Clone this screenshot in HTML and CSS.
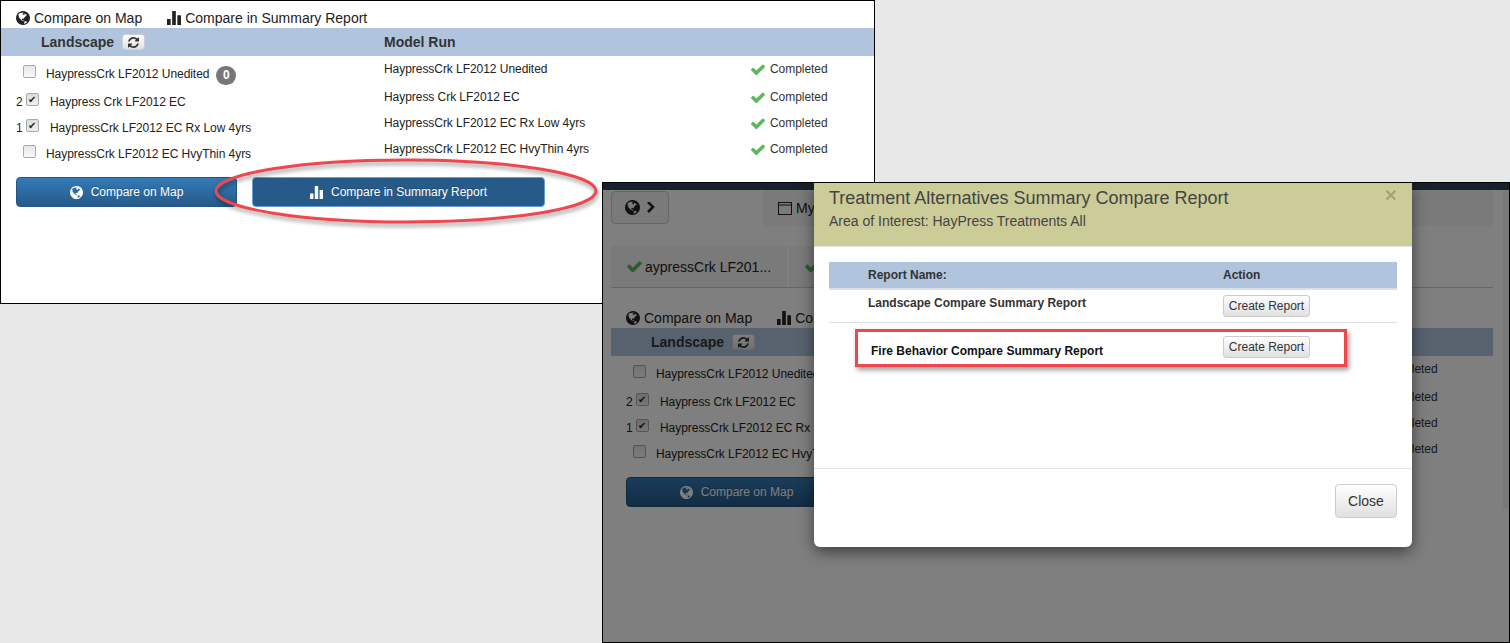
FILE: index.html
```html
<!DOCTYPE html>
<html>
<head>
  <meta charset="utf-8">
  <title>Compare Summary Report</title>
  <link rel="stylesheet" href="styles.css">
</head>
<body>

<svg class="defs" width="0" height="0">
  <symbol id="i-globe" viewBox="128 128 1536 1536"><path d="M896 128q209 0 385.5 103t279.5 279.5 103 385.5-103 385.5-279.5 279.5-385.5 103-385.5-103-279.5-279.5-103-385.5 103-385.5 279.5-279.5 385.5-103zm274 521q-2 1-9.5 9.5t-13.5 9.5q2 0 4.5-5t5-11 3.5-7q6-7 22-15 14-6 52-12 34-8 51 11-2-2 9.5-13t14.5-12q3-2 15-4.5t15-7.5l2-22q-12 1-17.5-7t-6.5-21q0 2-6 8 0-7-4.5-8t-11.5 1-9 1q-10-3-15-7.5t-8-16.5-4-15q-2-5-9.5-11t-9.5-10q-1-2-2.5-5.5t-3-6.5-4-5.5-5.5-2.5-7 5-7.5 10-4.5 5q-3-2-6-1.5t-4.5 1-4.5 3-5 3.5q-3 2-8.5 3t-8.5 2q15-5-1-11-10-4-16-3 9-4 7.5-12t-8.5-14h5q-1-4-8.5-8.5t-17.5-8.5-13-6q-8-5-34-9.5t-33-.5q-5 6-4.5 10.5t4 14 3.5 12.5q1 6-5.5 13t-6.5 12q0 7 14 15.5t10 21.5q-3 8-16 16t-16 12q-5 8-1.5 18.5t10.5 16.5q2 2 1.5 4t-3.5 4.5-5.5 4-6.5 3.5l-3 2q-11 5-20.5-6t-13.5-26q-7-25-16-30-23-8-29 1-5-13-41-26-25-9-58-4 6-1 0-15-7-15-19-12 3-6 4-17.5t1-13.5q3-13 12-23 1-1 7-8.5t9.5-13.5.5-6q35 4 50-11 5-5 11.5-17t10.5-17q9-6 14-5.5t14.5 5.5 14.5 5q14 1 15.5-11t-7.5-20q12 1 3-17-4-7-8-9-12-4-27 5-8 4 2 8-1-1-9.5 10.5t-16.5 17.5-16-5q-1-1-5.5-13.5t-9.5-13.5q-8 0-16 15 3-8-11-15t-24-8q19-12-8-27-7-4-20.5-5t-19.5 4q-5 7-5.5 11.5t5 8 10.5 5.5 11.5 4 8.5 3q14 10 8 14-2 1-8.5 3.5t-11.5 4.5-6 4q-3 4 0 14t-2 14q-5-5-9-17.5t-7-16.5q7 9-25 6l-10-1q-4 0-16 2t-20.5 1-13.5-8q-4-8 0-20 1-4 4-2-4-3-11-9.5t-10-8.5q-46 15-94 41 6 1 12-1 5-2 13-6.5t10-5.5q34-14 42-7l5-5q14 16 20 25-7-4-30-1-20 6-22 12 7 12 5 18-4-3-11.5-10t-14.5-11-15-5q-16 0-22 1-146 80-235 222 7 7 12 8 4 1 5 9t2.5 11 11.5-3q9 8 3 19 1-1 44 27 19 17 21 21 3 11-10 18-1-2-9-9t-9-4q-3 5 .5 18.5t10.5 12.5q-7 0-9.5 16t-2.5 35.5-1 23.5l2 1q-3 12 5.5 34.5t21.5 19.5q-13 3 20 43 6 8 8 9 3 2 12 7.5t15 10 10 10.5q4 5 10 22.5t14 23.5q-2 6 9.5 20t10.5 23q-1 0-2.5 1t-2.5 1q3 7 15.5 14t15.5 13q1 3 2 10t3 11 8 2q2-20-24-62-15-25-17-29-3-5-5.5-15.5t-4.5-14.5q2 0 6 1.5t8.5 3.5 7.5 4 2 3q-3 7 2 17.5t12 18.5 17 19 12 13q6 6 14 19.5t0 13.5q9 0 20 10.5t17 19.5q5 8 8 26t5 24q2 7 8.5 13.5t12.5 9.5l16 8 13 7q5 2 18.5 10.5t21.5 11.5q10 4 16 4t14.5-2.5 13.5-3.5q15-2 29 15t21 21q36 19 55 11-2 1 .5 7.5t8 15.5 9 14.5 5.5 8.5q5 6 18 15t18 15q6-4 7-9-3 8 7 20t18 10q14-3 14-32-31 15-49-18 0-1-2.5-5.5t-4-8.5-2.5-8.5 0-7.5 5-3q9 0 10-3.5t-2-12.5-4-13q-1-8-11-20t-12-15q-5 9-16 8t-16-9q0 1-1.5 5.5t-1.5 6.5q-13 0-15-1 1-3 2.5-17.5t3.5-22.5q1-4 5.5-12t7.5-14.5 4-12.5-4.5-9.5-17.5-2.5q-19 1-26 20-1 3-3 10.5t-5 11.5-9 7q-7 3-24 2t-24-5q-13-8-22.5-29t-9.5-37q0-10 2.5-26.5t3-25-5.5-24.5q3-2 9-9.5t10-10.5q2-1 4.5-1.5t4.5 0 4-1.5 3-6q-1-1-4-3-3-3-4-3 7 3 28.5-1.5t27.5 1.5q15 11 22-2 0-1-2.5-9.5t-.5-13.5q5 27 29 9 3 3 15.5 5t17.5 5q3 2 7 5.5t5.5 4.5 5-.5 8.5-6.5q10 14 12 24 11 40 19 44 7 3 11 2t4.5-9.5 0-14-1.5-12.5l-1-8v-18l-1-8q-15-3-18.5-12t1.5-18.5 15-18.5q1-1 8-3.5t15.5-6.5 12.5-8q21-19 15-35 7 0 11-9-1 0-5-3t-7.5-5-4.5-2q9-5 2-16 5-3 7.5-11t7.5-10q9 12 21 2 8-8 1-16 5-7 20.5-10.5t18.5-9.5q7 2 8-2t1-12 3-12q4-5 15-9t13-5l17-11q3-4 0-4 18 2 31-11 10-11-6-20 3-6-3-9.5t-15-5.5q3-1 11.5-.5t10.5-1.5q15-10-7-16-17-5-43 12zm-163 877q206-36 351-189-3-3-12.5-4.5t-12.5-3.5q-18-7-24-8 1-7-2.5-13t-8-9-12.5-8-11-7q-2-2-7-6t-7-5.5-7.5-4.5-8.5-2-10 1l-3 1q-3 1-5.5 2.5t-5.5 3-4 3 0 2.5q-21-17-36-22-5-1-11-5.5t-10.5-7-10-1.5-11.5 7q-5 5-6 15t-2 13q-7-5 0-17.5t2-18.5q-3-6-10.5-4.5t-12 4.5-11.5 8.5-9 6.5-8.5 5.5-8.5 7.5q-3 4-6 12t-5 11q-2-4-11.5-6.5t-9.5-5.5q2 10 4 35t5 38q7 31-12 48-27 25-29 40-4 22 12 26 0 7-8 20.5t-7 21.5q0 6 2 16z"/></symbol>
  <symbol id="i-bars" viewBox="0 0 13 13"><path d="M0 7.5h3.4V13H0zM4.8 0h3.4v13H4.8zM9.6 4h3.4v9H9.6z"/></symbol>
  <symbol id="i-refresh" viewBox="128 128 1536 1536"><path d="M1639 1056q0 5-1 7-64 268-268 434.5t-478 166.5q-146 0-282.5-55t-243.5-157l-129 129q-19 19-45 19t-45-19-19-45v-448q0-26 19-45t45-19h448q26 0 45 19t19 45-19 45l-137 137q71 66 161 102t187 36q134 0 250-65t186-179q11-17 53-117 8-23 30-23h192q13 0 22.5 9.5t9.5 22.5zm25-800v448q0 26-19 45t-45 19h-448q-26 0-45-19t-19-45 19-45l138-138q-148-137-349-137-134 0-250 65t-186 179q-11 17-53 117-8 23-30 23h-199q-13 0-22.5-9.5t-9.5-22.5v-7q65-268 270-434.5t480-166.5q146 0 284 55.5t245 156.5l130-129q19-19 45-19t45 19 19 45z"/></symbol>
  <symbol id="i-check" viewBox="121 316 1550 1160"><path d="M1671 566q0 40-28 68l-724 724-136 136q-28 28-68 28t-68-28l-136-136-362-362q-28-28-28-68t28-68l136-136q28-28 68-28t68 28l294 295 656-657q28-28 68-28t68 28l136 136q28 28 28 68z"/></symbol>
  <symbol id="i-chevron" viewBox="365 128 1017 1536"><path d="M1363 877l-742 742q-19 19-45 19t-45-19l-166-166q-19-19-19-45t19-45l531-531-531-531q-19-19-19-45t19-45l166-166q19-19 45-19t45 19l742 742q19 19 19 45t-19 45z"/></symbol>
</svg>

<!-- first screenshot: list with the two compare buttons -->
<div class="window window-list">
  <div class="panel">
    <div class="links">
      <span class="link"><svg class="ico"><use href="#i-globe"/></svg>Compare on Map</span>
      <span class="link"><svg class="ico"><use href="#i-bars"/></svg>Compare in Summary Report</span>
    </div>
    <div class="head-row">
      <div class="head-land">Landscape <span class="refresh"><svg><use href="#i-refresh"/></svg></span></div>
      <div>Model Run</div>
    </div>
    <div class="run-row">
      <label class="run-land"><input type="checkbox"><span class="run-name">HaypressCrk LF2012 Unedited</span><span class="badge">0</span></label>
      <div class="run-model">HaypressCrk LF2012 Unedited</div>
      <div class="run-status"><svg class="tick"><use href="#i-check"/></svg>Completed</div>
    </div>
    <div class="run-row">
      <label class="run-land numbered"><span class="order">2</span><input type="checkbox" checked><span class="run-name">Haypress Crk LF2012 EC</span></label>
      <div class="run-model">Haypress Crk LF2012 EC</div>
      <div class="run-status"><svg class="tick"><use href="#i-check"/></svg>Completed</div>
    </div>
    <div class="run-row">
      <label class="run-land numbered"><span class="order">1</span><input type="checkbox" checked><span class="run-name">HaypressCrk LF2012 EC Rx Low 4yrs</span></label>
      <div class="run-model">HaypressCrk LF2012 EC Rx Low 4yrs</div>
      <div class="run-status"><svg class="tick"><use href="#i-check"/></svg>Completed</div>
    </div>
    <div class="run-row">
      <label class="run-land"><input type="checkbox"><span class="run-name">HaypressCrk LF2012 EC HvyThin 4yrs</span></label>
      <div class="run-model">HaypressCrk LF2012 EC HvyThin 4yrs</div>
      <div class="run-status"><svg class="tick"><use href="#i-check"/></svg>Completed</div>
    </div>
    <div class="actions">
      <button class="btn-blue btn-map"><svg class="ico"><use href="#i-globe"/></svg>Compare on Map</button>
      <button class="btn-blue btn-summary"><svg class="ico"><use href="#i-bars"/></svg>Compare in Summary Report</button>
    </div>
  </div>
</div>

<!-- hand drawn callout round the summary button -->
<svg class="callout" width="400" height="80" viewBox="0 0 400 80">
  <ellipse cx="199" cy="39" rx="190" ry="31"/>
</svg>

<!-- second screenshot: same page with the report modal open -->
<div class="window window-modal">
  <div class="topbar"></div>
  <div class="nav">
    <div class="nav-globe"><svg class="ico"><use href="#i-globe"/></svg><svg class="chev"><use href="#i-chevron"/></svg></div>
    <div class="nav-pill">
      <svg class="win-ico" viewBox="0 0 14 13"><rect x=".5" y=".5" width="13" height="12" fill="none"/><path d="M.5 3h13" fill="none"/></svg>My
    </div>
  </div>
  <div class="tabs">
    <div class="tab"><svg class="tab-tick"><use href="#i-check"/></svg>aypressCrk LF201...</div>
    <div class="tab"><svg class="tab-tick"><use href="#i-check"/></svg></div>
  </div>
  <div class="panel panel-wide">
    <div class="links">
      <span class="link"><svg class="ico"><use href="#i-globe"/></svg>Compare on Map</span>
      <span class="link"><svg class="ico"><use href="#i-bars"/></svg>Compare</span>
    </div>
    <div class="head-row">
      <div class="head-land">Landscape <span class="refresh"><svg><use href="#i-refresh"/></svg></span></div>
    </div>
    <div class="run-row">
      <label class="run-land"><input type="checkbox"><span class="run-name">HaypressCrk LF2012 Unedited</span></label>
      <div class="run-model"></div>
      <div class="run-status"><svg class="tick"><use href="#i-check"/></svg>Completed</div>
    </div>
    <div class="run-row">
      <label class="run-land numbered"><span class="order">2</span><input type="checkbox" checked><span class="run-name">Haypress Crk LF2012 EC</span></label>
      <div class="run-model"></div>
      <div class="run-status"><svg class="tick"><use href="#i-check"/></svg>Completed</div>
    </div>
    <div class="run-row">
      <label class="run-land numbered"><span class="order">1</span><input type="checkbox" checked><span class="run-name">HaypressCrk LF2012 EC Rx Low 4yrs</span></label>
      <div class="run-model"></div>
      <div class="run-status"><svg class="tick"><use href="#i-check"/></svg>Completed</div>
    </div>
    <div class="run-row">
      <label class="run-land"><input type="checkbox"><span class="run-name">HaypressCrk LF2012 EC HvyThin 4yrs</span></label>
      <div class="run-model"></div>
      <div class="run-status"><svg class="tick"><use href="#i-check"/></svg>Completed</div>
    </div>
    <div class="actions">
      <button class="btn-blue btn-map"><svg class="ico"><use href="#i-globe"/></svg>Compare on Map</button>
    </div>
  </div>
  <div class="scroll-track"></div>
  <div class="backdrop"></div>

  <div class="modal">
    <div class="modal-header">
      <span class="modal-x">&times;</span>
      <h4>Treatment Alternatives Summary Compare Report</h4>
      <div class="modal-sub">Area of Interest: HayPress Treatments All</div>
    </div>
    <div class="modal-body">
      <div class="report-head"><div>Report Name:</div><div>Action</div></div>
      <div class="report-row">
        <div>Landscape Compare Summary Report</div>
        <div><button class="btn-create">Create Report</button></div>
      </div>
      <div class="report-row marked">
        <div>Fire Behavior Compare Summary Report</div>
        <div><button class="btn-create">Create Report</button></div>
      </div>
    </div>
    <div class="modal-footer"><button class="btn-close">Close</button></div>
  </div>
</div>

</body>
</html>
```

FILE: styles.css
```css
* { box-sizing: border-box; }

html, body { height: 100%; }

body {
  margin: 0;
  background: #e8e8e8;
  font-family: "Liberation Sans", Arial, sans-serif;
  font-size: 12px;
  color: #222;
  overflow: hidden;
}

.defs { position: absolute; }

.window {
  position: absolute;
  background: #fff;
  border: 1px solid #000;
}

.window-list { left: 0; top: 0; width: 875px; height: 304px; }
.window-modal { left: 602px; top: 182px; width: 908px; height: 461px; overflow: hidden; }

.callout {
  position: absolute;
  left: 207px;
  top: 152px;
  overflow: visible;
}
.callout ellipse {
  fill: none;
  stroke: #f0474f;
  stroke-width: 3px;
  filter: drop-shadow(1px 3px 2px rgba(0,0,0,.4));
}

/* list panel */
.panel { width: 873px; }
.panel-wide { width: 882px; margin-left: 8px; }

.links {
  display: flex;
  height: 27px;
  padding: 6px 0 0 15px;
  align-items: center;
  gap: 25px;
  font-size: 14px;
}
.link { display: flex; align-items: center; }
.ico { width: 14px; height: 14px; margin-right: 4px; fill: currentColor; }
.link svg[class="ico"]:first-child { flex: none; }

.head-row {
  display: grid;
  grid-template-columns: 383px 1fr;
  height: 28px;
  align-items: center;
  background: #b0c4de;
  font-size: 14px;
  font-weight: bold;
  color: #333;
}
.head-land { padding-left: 40px; display: flex; align-items: center; gap: 8px; }

.refresh {
  display: flex;
  width: 23px;
  height: 16px;
  align-items: center;
  justify-content: center;
  background: linear-gradient(#fff, #e0e0e0);
  border-radius: 3px;
  border: 1px solid #ccd;
}
.refresh svg { width: 11px; height: 11px; fill: #333; }

.run-row {
  display: grid;
  grid-template-columns: 383px 367px 1fr;
  grid-template-rows: 26px;
  height: 26px;
  line-height: 26px;
  letter-spacing: -.05px;
}
.run-row:nth-of-type(3) { height: 28px; }

.run-land {
  display: flex;
  align-items: center;
  height: 26px;
  margin-top: 5px;
  padding-left: 22px;
}
.run-land.numbered { padding-left: 15px; }

.order { width: 10px; margin-top: -1px; }

.run-land input {
  appearance: none;
  position: relative;
  flex: none;
  width: 13px;
  height: 13px;
  margin: -5px 10px 0 0;
  border: 1px solid #a9a9a9;
  border-radius: 2px;
  background: linear-gradient(#e8e8e8, #f8f8f8);
}
.run-land.numbered input { margin-right: 11px; }
.run-land input:checked { background: linear-gradient(#ddd, #eee); }
.run-land input:checked::after {
  content: "\2714";
  position: absolute;
  left: 1px;
  top: 0;
  font: 10px/11px "DejaVu Sans", sans-serif;
  color: #222;
}

.badge {
  width: 20px;
  height: 19px;
  margin: 3px 0 0 7px;
  border-radius: 10px;
  background: #777;
  color: #fff;
  font-weight: bold;
  line-height: 19px;
  text-align: center;
}

.run-status { display: flex; align-items: center; color: #333; }
.tick { width: 14px; height: 11px; margin-right: 5px; fill: #5cb85c; }

.actions { display: flex; gap: 15px; margin: 15px 0 0 15px; }

.btn-blue {
  display: flex;
  height: 30px;
  align-items: center;
  justify-content: center;
  border: 1px solid #245580;
  border-radius: 4px;
  background: linear-gradient(#337ab7, #265a88);
  color: #fff;
  font: 12px "Liberation Sans", Arial, sans-serif;
  text-shadow: 0 -1px 0 rgba(0,0,0,.2);
}
.btn-map { width: 221px; }
.btn-map .ico, .btn-summary .ico { width: 13px; height: 13px; margin-right: 8px; }
.btn-summary { width: 293px; background: #265a88; border-color: #6a9bd8; }

/* dimmed page behind the modal */
.topbar { height: 7px; background: #2f4358; }

.nav { display: flex; height: 56px; padding-left: 8px; }
.nav-globe {
  display: flex;
  align-items: center;
  justify-content: center;
  width: 58px;
  height: 33px;
  margin-top: 1px;
  background: #f4f4f4;
  border: 1px solid #ccc;
  border-radius: 4px;
  color: #222;
}
.nav-globe .ico { width: 15px; height: 15px; margin-right: 7px; }
.chev { width: 8px; height: 11px; fill: #222; }

.nav-pill {
  display: flex;
  align-items: center;
  width: 730px;
  height: 36px;
  margin-left: 94px;
  padding-left: 15px;
  background: #f5f5f5;
  border-radius: 4px;
  font-size: 14px;
}
.win-ico {
  width: 14px;
  height: 13px;
  margin-right: 4px;
  stroke: #222;
}

.tabs {
  display: flex;
  gap: 2px;
  width: 882px;
  height: 42px;
  margin: 0 0 13px 8px;
  border-bottom: 1px solid #ccc;
  overflow: hidden;
}
.tab {
  display: flex;
  align-items: center;
  width: 176px;
  padding-left: 16px;
  background: #f4f4f4;
  font-size: 14px;
}
.tab-tick { width: 15px; height: 11px; margin-right: 3px; fill: #5cb85c; }

.scroll-track {
  position: absolute;
  left: 900px;
  top: 8px;
  width: 6px;
  height: 317px;
  background: #f0f0f0;
}

.backdrop {
  position: absolute;
  inset: 0;
  background: rgba(0,0,0,.5);
}

/* modal */
.modal {
  position: absolute;
  left: 211px;
  top: 0;
  display: flex;
  flex-direction: column;
  width: 598px;
  height: 364px;
  background: #fff;
  border-radius: 0 0 6px 6px;
  box-shadow: 0 5px 15px rgba(0,0,0,.5);
}

.modal-header {
  position: relative;
  height: 64px;
  padding: 5px 15px 0;
  background: #cccc99;
  border-bottom: 1px solid #e5e5e5;
  color: #444;
}
.modal-header h4 {
  margin: 0;
  font-size: 18px;
  font-weight: normal;
  line-height: 20px;
}
.modal-sub { margin-top: 3px; font-size: 14px; line-height: 20px; }
.modal-x {
  position: absolute;
  right: 15px;
  top: 0;
  font-size: 21px;
  font-weight: bold;
  line-height: 24px;
  color: #000;
  opacity: .2;
}

.modal-body { flex: 1; padding: 15px 15px 0; }

.report-head, .report-row {
  display: grid;
  grid-template-columns: 355px 1fr;
  padding-left: 39px;
  font-size: 12px;
  font-weight: bold;
}
.report-head {
  height: 28px;
  align-items: center;
  background: #b0c4de;
  border-bottom: 2px solid #d9dfe8;
  color: #333;
}
.report-row {
  height: 33px;
  padding-top: 5px;
  border-bottom: 1px solid #ddd;
  color: #333;
}
.report-row > div:first-child { line-height: 16px; }

.report-row.marked {
  grid-template-columns: 352px 1fr;
  align-items: center;
  width: 492px;
  height: 38px;
  margin: 6px 0 0 26px;
  padding: 0 0 2px 13px;
  border: 3px solid #f0474f;
  box-shadow: 2px 3px 5px rgba(0,0,0,.4);
  color: #111;
}
.report-row.marked > div:first-child { margin-top: 8px; }

.btn-create {
  width: 87px;
  height: 22px;
  padding: 0;
  border: 1px solid #ccc;
  border-radius: 3px;
  background: linear-gradient(#fff, #e0e0e0);
  font: 12px "Liberation Sans", Arial, sans-serif;
  color: #333;
}

.modal-footer {
  display: flex;
  justify-content: flex-end;
  height: 79px;
  padding: 15px;
  border-top: 1px solid #e5e5e5;
}

.btn-close {
  width: 62px;
  height: 34px;
  padding: 0;
  border: 1px solid #ccc;
  border-radius: 4px;
  background: linear-gradient(#fff, #e0e0e0);
  font: 14px "Liberation Sans", Arial, sans-serif;
  color: #333;
}
```
